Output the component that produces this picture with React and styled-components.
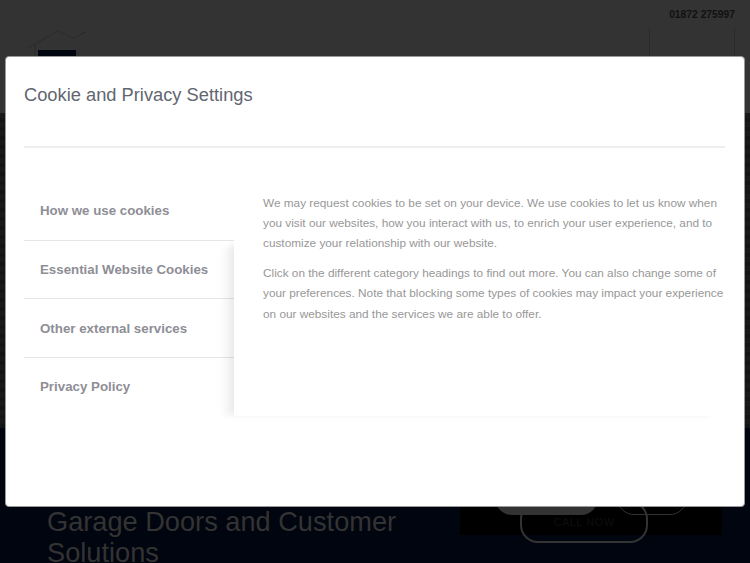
import React from "react";
import styled, { createGlobalStyle } from "styled-components";

const Global = createGlobalStyle`
  html, body { margin: 0; padding: 0; background: #01050f; }
  body { font-family: "Liberation Sans", Arial, sans-serif; overflow: hidden; }
`;

const Page = styled.div`
  position: relative;
  width: 750px;
  height: 563px;
  overflow: hidden;
  display: flex;
  flex-direction: column;
  background: #01050f;
`;

const Header = styled.header`
  height: 113px;
  flex-shrink: 0;
  background: #333333;
  display: flex;
  justify-content: space-between;
  padding: 8px 15px 0 27px;
  box-sizing: border-box;
`;

const LogoMark = styled.svg`
  width: 62px;
  height: 27px;
  margin-top: 22px;
  display: block;
`;

const HeaderRight = styled.div`
  display: flex;
  flex-direction: column;
  align-items: flex-end;
`;

const Phone = styled.div`
  font-size: 10.3px;
  line-height: 13px;
  font-weight: 700;
  color: #111111;
`;

const MenuBox = styled.div`
  margin-top: 7px;
  width: 86px;
  height: 32px;
  box-sizing: border-box;
  border-left: 1px solid #2a2a2a;
  border-right: 1px solid #2a2a2a;
`;

const Band = styled.div`
  height: 315px;
  flex-shrink: 0;
  background: repeating-linear-gradient(180deg, #19191b 0 5px, #131416 5px 9px);
`;

const Hero = styled.section`
  flex: 1;
  min-height: 0;
  display: flex;
  background: #01050f;
  padding: 78px 28px 0 47px;
  justify-content: space-between;
`;

const HeroTitle = styled.h1`
  margin: 0;
  width: 400px;
  font-size: 27.2px;
  line-height: 31px;
  font-weight: 400;
  color: #333333;
`;

const CtaPanel = styled.div`
  width: 262px;
  height: 29px;
  background: #000000;
  display: flex;
  flex-direction: column;
  align-items: center;
`;

const CtaRow = styled.div`
  display: flex;
  gap: 19px;
  margin-top: -25px;
`;

const FilledCta = styled.div`
  width: 103px;
  height: 34px;
  border-radius: 17px;
  background: #333333;
`;

const GhostCta = styled.div`
  width: 70px;
  height: 34px;
  box-sizing: border-box;
  border-radius: 17px;
  border: 1px solid #333333;
`;

const CallCta = styled.div`
  width: 128px;
  height: 42px;
  margin: -14px 0 0 -14px;
  flex-shrink: 0;
  box-sizing: border-box;
  border-radius: 18px;
  border: 2px solid #333333;
  font-size: 11px;
  color: #0e0e0e;
  display: flex;
  align-items: center;
  justify-content: center;
  letter-spacing: 0.5px;
`;

const Modal = styled.div`
  position: absolute;
  z-index: 2;
  left: 5px;
  top: 56px;
  width: 740px;
  height: 451px;
  box-sizing: border-box;
  background: #ffffff;
  border: 1px solid #999999;
  border-radius: 4px;
  padding: 0 19px 0 18px;
  display: flex;
  flex-direction: column;
`;

const ModalHeader = styled.div`
  height: 91px;
  flex-shrink: 0;
  box-sizing: border-box;
  border-bottom: 2px solid #eeeeee;
  padding-top: 26px;
`;

const ModalTitle = styled.h2`
  margin: 0;
  font-size: 18.3px;
  line-height: 24px;
  font-weight: 400;
  color: #62666f;
`;

const Body = styled.div`
  margin-top: 34px;
  display: flex;
  align-items: flex-start;
`;

const Tabs = styled.ul`
  list-style: none;
  margin: 0;
  padding: 0;
  width: 210px;
  flex-shrink: 0;
`;

const Tab = styled.li`
  height: ${(p) => (p.$last ? 57 : 58.67)}px;
  box-sizing: border-box;
  padding-left: 16px;
  display: flex;
  align-items: center;
  font-size: 13.3px;
  font-weight: 700;
  color: #8e8e96;
  border-bottom: ${(p) => (p.$last ? "none" : "1px solid #e5e5e5")};
`;

const Content = styled.div`
  position: relative;
  width: 492px;
  height: 234px;
  box-sizing: border-box;
  padding: 11px 0 0 29px;

  &::before {
    content: "";
    position: absolute;
    top: 58px;
    left: 0;
    right: 0;
    bottom: 0;
    background: #ffffff;
    clip-path: inset(0 0 -20px -20px);
    box-shadow:
      -6px 0 7px -3px rgba(0, 0, 0, 0.06),
      -14px 4px 6px -3px rgba(0, 0, 0, 0.035);
  }
`;

const Para = styled.p`
  position: relative;
  margin: 0 0 9.5px;
  font-size: 11.8px;
  line-height: 20.2px;
  color: #979797;
`;

export default function App() {
  return (
    <Page>
      <Global />
      <Header>
        <LogoMark viewBox="0 0 62 27" fill="none">
          <path d="M1 18 L31 1 L46 8 L59 2" stroke="#2a2a2a" strokeWidth="1" />
          <path d="M8 15 V27" stroke="#2a2a2a" strokeWidth="1" />
          <rect x="11" y="20" width="38" height="7" fill="#01050f" />
        </LogoMark>
        <HeaderRight>
          <Phone>01872 275997</Phone>
          <MenuBox />
        </HeaderRight>
      </Header>
      <Band />
      <Hero>
        <HeroTitle>Garage Doors and Customer Solutions</HeroTitle>
        <CtaPanel>
          <CtaRow>
            <FilledCta />
            <GhostCta />
          </CtaRow>
          <CallCta>CALL NOW</CallCta>
        </CtaPanel>
      </Hero>
      <Modal>
        <ModalHeader>
          <ModalTitle>Cookie and Privacy Settings</ModalTitle>
        </ModalHeader>
        <Body>
          <Tabs>
            <Tab>How we use cookies</Tab>
            <Tab>Essential Website Cookies</Tab>
            <Tab>Other external services</Tab>
            <Tab $last>Privacy Policy</Tab>
          </Tabs>
          <Content>
            <Para>
              We may request cookies to be set on your device. We use cookies to let us know when you visit our websites, how you interact with us, to enrich your user experience, and to customize your relationship with our website.
            </Para>
            <Para>
              Click on the different category headings to find out more. You can also change some of your preferences. Note that blocking some types of cookies may impact your experience on our websites and the services we are able to offer.
            </Para>
          </Content>
        </Body>
      </Modal>
    </Page>
  );
}
